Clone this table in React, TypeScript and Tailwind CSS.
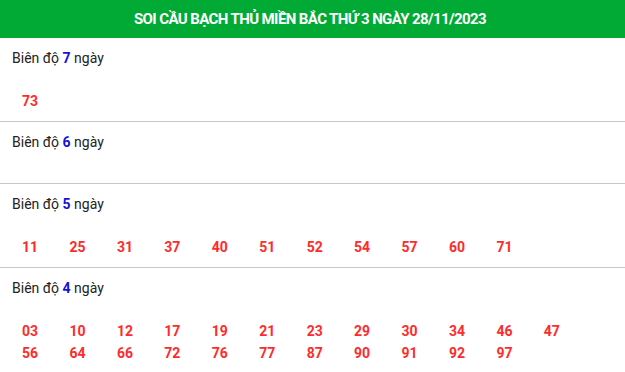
import React from "react";

type Block = { days: number; nums: string[] };

const blocks: Block[] = [
    { days: 7, nums: ["73"] },
    { days: 6, nums: [] },
    { days: 5, nums: ["11", "25", "31", "37", "40", "51", "52", "54", "57", "60", "71"] },
    {
        days: 4,
        nums: [
            "03", "10", "12", "17", "19", "21", "23", "29", "30", "34", "46", "47",
            "56", "64", "66", "72", "76", "77", "87", "90", "91", "92", "97",
        ],
    },
];

const App: React.FC = () => {
    return (
        <div className="w-[625px] bg-white font-['Roboto',sans-serif]">
            {/* Title bar */}
            <div className="h-[38px] bg-[#00aa35] flex items-center justify-center">
                <h1 className="text-white font-bold text-[15px] tracking-[-0.6px] uppercase pr-[5px]">
                    SOI CẦU BẠCH THỦ MIỀN BẮC THỨ 3 NGÀY 28/11/2023
                </h1>
            </div>

            {blocks.map((b) => (
                <div key={b.days} className="pt-[10px] border-b border-[#c6c6c6]">
                    <div className="pl-[12px] h-[20px] leading-[20px] text-[14px] text-[#222]">
                        Biên độ <span className="font-bold text-[#1414d4]">{b.days}</span> ngày
                    </div>
                    <div className="mt-[22px] pb-[9px] pl-[22px] flex flex-wrap">
                        {b.nums.map((n) => (
                            <span
                                key={n}
                                className="w-[47.45px] leading-[22px] text-[14px] font-bold text-[#ff2b2b]"
                            >
                                {n}
                            </span>
                        ))}
                    </div>
                </div>
            ))}
        </div>
    );
};

export default App;
